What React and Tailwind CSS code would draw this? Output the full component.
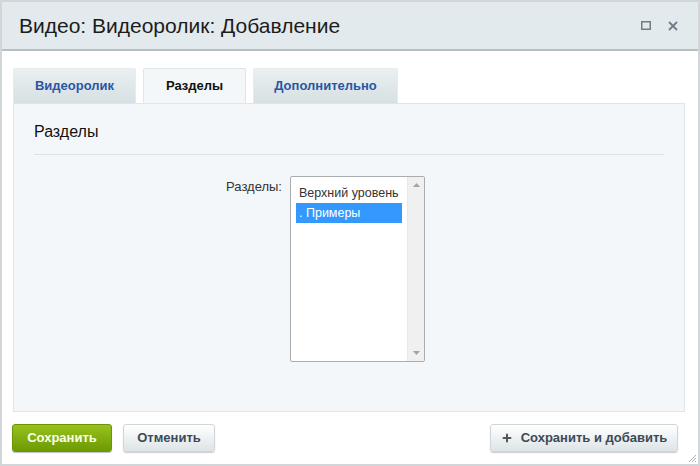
import { Plus } from "lucide-react";

const font = { fontFamily: '"Liberation Sans", Arial, sans-serif' };

export default function App() {
  const tabs = [
    { label: "Видеоролик", w: "w-[123px]" },
    { label: "Разделы", w: "w-[103px]", active: true },
    { label: "Дополнительно", w: "w-[145px]" },
  ];

  return (
    <div style={font} className="relative flex h-[466px] w-[700px] flex-col border-2 border-[#d3d6d8] bg-white">
      {/* window title */}
      <div className="flex h-[49px] shrink-0 items-center justify-between border-b-2 border-[#b9bdbf] bg-[#e3eaed] pl-[17px] pr-[20px]">
        <h1 className="text-[21px] leading-none text-[#1c1c1c]">Видео: Видеоролик: Добавление</h1>
        <div className="flex items-center gap-[17px] text-[#6f7d8b]">
          <svg width="10" height="9" viewBox="0 0 10 9">
            <rect x="0.75" y="0.75" width="8.5" height="7.5" fill="none" stroke="currentColor" strokeWidth="1.5" />
          </svg>
          <svg width="10" height="10" viewBox="0 0 10 10">
            <path d="M1 1L9 9M9 1L1 9" stroke="currentColor" strokeWidth="1.8" />
          </svg>
        </div>
      </div>

      {/* tabs + panel */}
      <div className="flex flex-col pl-[11px] pr-[13px] pt-[17px]">
        <div className="flex gap-[7px]">
          {tabs.map((t, i) => (
            <div
              key={i}
              className={`flex h-[35px] items-center justify-center rounded-t-[2px] text-[13px] font-bold ${t.w} ${
                t.active
                  ? "relative z-10 -mb-px border border-b-0 border-[#dfe6ea] bg-[#f4f7f9] text-[#111]"
                  : "border border-b-0 border-[#e6ecee] bg-gradient-to-b from-[#eaf0f2] to-[#d6dfe2] text-[#2a56a4]"
              }`}
            >
              {t.label}
            </div>
          ))}
        </div>

        <div className="h-[309px] border border-[#dfe6ea] bg-[#f4f7f9] px-[20px] pt-[17px]">
          <h2 className="text-[16px] leading-[22px] text-[#111]">Разделы</h2>
          <div className="mt-[11px] border-t border-[#dce2e5]" />

          <div className="mt-[21px] flex">
            <div className="w-[248px] pt-[1px] text-right text-[13px] text-[#333]">Разделы:</div>
            <div className="ml-[8px] flex h-[186px] w-[135px] rounded-[2px] border border-[#a9adb0] bg-white">
              <div className="flex flex-1 flex-col overflow-hidden whitespace-nowrap px-[5px] pt-[6px] text-[12.5px]">
                <div className="h-[20px] px-[3px] leading-[20px] text-[#333]">Верхний уровень</div>
                <div className="h-[20px] bg-[#3399ff] px-[3px] leading-[20px] text-white">. Примеры</div>
              </div>
              <div className="flex w-[17px] flex-col items-center justify-between border-l border-[#e8e8e8] bg-[#f0f0f0] py-[6px]">
                <svg width="7" height="4" viewBox="0 0 7 4">
                  <path d="M0 4L3.5 0L7 4Z" fill="#a3a3a3" />
                </svg>
                <svg width="7" height="4" viewBox="0 0 7 4">
                  <path d="M0 0L3.5 4L7 0Z" fill="#a3a3a3" />
                </svg>
              </div>
            </div>
          </div>
        </div>
      </div>

      {/* buttons */}
      <div className="mt-[12px] flex items-center justify-between pl-[10px] pr-[20px]">
        <div className="flex gap-[11px]">
          <button className="h-[28px] w-[100px] rounded-[3px] border border-[#6b9406] bg-gradient-to-b from-[#97c21c] to-[#6d9a03] text-[13px] font-bold text-[#fbffe6] shadow-[0_1px_1px_rgba(0,0,0,0.25)]">
            Сохранить
          </button>
          <button className="h-[28px] w-[92px] rounded-[3px] border border-[#cfd6da] bg-gradient-to-b from-white to-[#dde4e7] text-[13px] font-bold text-[#3c4a56] shadow-[0_1px_1px_rgba(0,0,0,0.2)]">
            Отменить
          </button>
        </div>
        <button className="flex h-[28px] w-[188px] items-center justify-center gap-[8px] rounded-[3px] border border-[#cfd6da] bg-gradient-to-b from-white to-[#dde4e7] text-[13px] font-bold text-[#3c4a56] shadow-[0_1px_1px_rgba(0,0,0,0.2)]">
          <Plus className="h-[12px] w-[12px] text-[#555]" strokeWidth={4} />
          Сохранить и добавить
        </button>
      </div>

      {/* resize grip */}
      <svg className="absolute bottom-[1px] right-[1px]" width="10" height="10" viewBox="0 0 10 10">
        <path d="M9 2L2 9M9 5L5 9M9 8L8 9" stroke="#b0b0b0" strokeWidth="1" />
      </svg>
    </div>
  );
}
